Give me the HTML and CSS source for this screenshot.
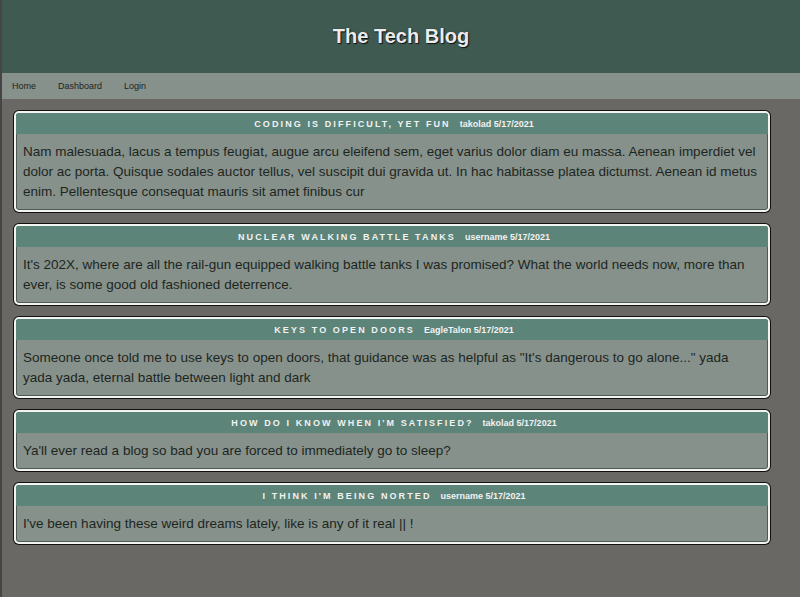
FILE: index.html
```html
<!DOCTYPE html>
<html lang="en">
<head>
<meta charset="utf-8">
<title>The Tech Blog</title>
<link rel="stylesheet" href="styles.css">
</head>
<body>
  <header class="site-header">
    <h1 class="site-title">The Tech Blog</h1>
  </header>
  <nav class="site-nav">
    <a class="nav-link" href="#">Home</a>
    <a class="nav-link" href="#">Dashboard</a>
    <a class="nav-link" href="#">Login</a>
  </nav>
  <main class="posts">
    <article class="post">
      <div class="post-head"><span class="post-title">Coding is difficult, yet fun</span><span class="post-meta">takolad 5/17/2021</span></div>
      <p class="post-body">Nam malesuada, lacus a tempus feugiat, augue arcu eleifend sem, eget varius dolor diam eu massa. Aenean imperdiet vel dolor ac porta. Quisque sodales auctor tellus, vel suscipit dui gravida ut. In hac habitasse platea dictumst. Aenean id metus enim. Pellentesque consequat mauris sit amet finibus cur</p>
    </article>
    <article class="post">
      <div class="post-head"><span class="post-title">Nuclear walking battle tanks</span><span class="post-meta">username 5/17/2021</span></div>
      <p class="post-body">It's 202X, where are all the rail-gun equipped walking battle tanks I was promised? What the world needs now, more than ever, is some good old fashioned deterrence.</p>
    </article>
    <article class="post">
      <div class="post-head"><span class="post-title">Keys to open doors</span><span class="post-meta">EagleTalon 5/17/2021</span></div>
      <p class="post-body">Someone once told me to use keys to open doors, that guidance was as helpful as "It's dangerous to go alone..." yada yada yada, eternal battle between light and dark</p>
    </article>
    <article class="post">
      <div class="post-head"><span class="post-title">How do I know when I'm satisfied?</span><span class="post-meta">takolad 5/17/2021</span></div>
      <p class="post-body">Ya'll ever read a blog so bad you are forced to immediately go to sleep?</p>
    </article>
    <article class="post">
      <div class="post-head"><span class="post-title">I think I'm being norted</span><span class="post-meta">username 5/17/2021</span></div>
      <p class="post-body">I've been having these weird dreams lately, like is any of it real || !</p>
    </article>
  </main>
</body>
</html>
```

FILE: styles.css
```css
html, body {
  margin: 0;
  padding: 0;
}

body {
  min-height: 597px;
  box-sizing: border-box;
  background: #6a6864;
  border-left: 2px solid #454545;
  font-family: "Liberation Sans", Arial, sans-serif;
}

.site-header {
  height: 73px;
  background: #3e5a51;
  display: flex;
  align-items: center;
  justify-content: center;
}

.site-title {
  margin: 0;
  font-size: 20px;
  font-weight: bold;
  color: #ececec;
  text-shadow: 1px 1px 1px #111, 0 0 1px #222;
}

.site-nav {
  height: 26px;
  background: #87918b;
  display: flex;
  align-items: center;
  padding-left: 10px;
}

.nav-link {
  font-size: 9px;
  color: #1f2421;
  text-decoration: none;
  margin-right: 22px;
}

.posts {
  display: flex;
  flex-direction: column;
  gap: 12px;
  padding: 12px 30px 0 12px;
}

.post {
  border: 2px solid #f2f4f2;
  border-radius: 5px;
  box-shadow: 0 0 0 1px #111, inset 0 0 0 1px #4f5a55;
  overflow: hidden;
  background: #87918b;
}

.post-head {
  height: 21px;
  background: #5c8479;
  display: flex;
  align-items: center;
  justify-content: center;
  color: #f2f2f2;
  font-size: 9px;
  font-weight: bold;
  padding-left: 4px;
}

.post-title {
  text-transform: uppercase;
  letter-spacing: 2.1px;
  margin-right: 9px;
}

.post-body {
  margin: 0;
  padding: 8px 7px 8px;
  font-size: 13.5px;
  line-height: 20px;
  color: #1c2621;
}
```
